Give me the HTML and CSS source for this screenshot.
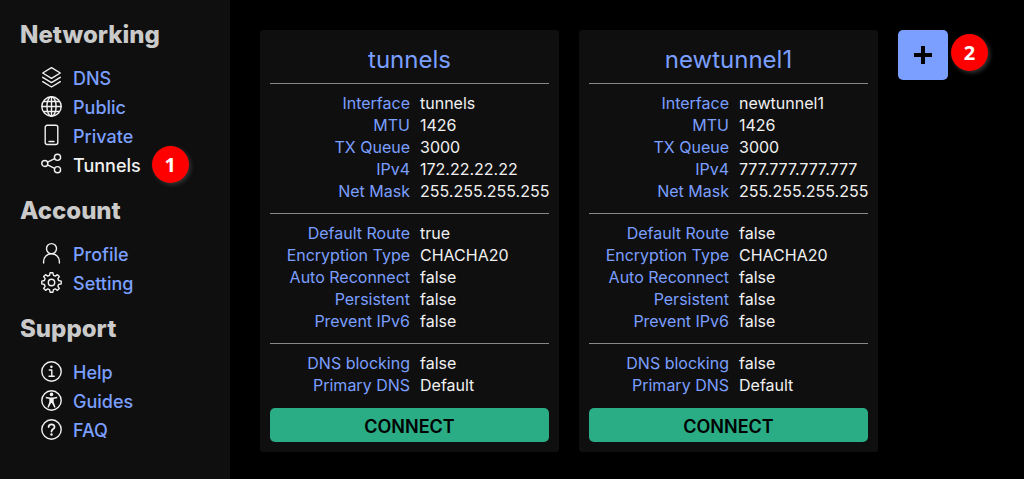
FILE: index.html
```html
<!DOCTYPE html>
<html lang="en">
<head>
<meta charset="utf-8">
<title>Tunnels</title>
<link rel="stylesheet" href="styles.css">
</head>
<body>
<div class="app">
  <nav class="sidebar">
    <section class="group">
      <h2 class="group-title">Networking</h2>
      <a class="nav-item" href="#dns"><svg class="icon" viewBox="0 0 21 21"><path d="M10.500 .7 19.300 6 10.500 11.300 1.700 6Z"/><path d="M1.700 10.300 10.500 15.600 19.300 10.300M1.700 14.700 10.500 20 19.300 14.700"/></svg>DNS</a>
      <a class="nav-item" href="#public"><svg class="icon" viewBox="0 0 21 21"><circle cx="10.500" cy="10.500" r="9.700"/><ellipse cx="10.500" cy="10.500" rx="4.600" ry="9.700"/><path d="M10.500 .8V20.200M.8 10.500H20.200M2.500 5.500H18.500M2.500 15.500H18.500"/></svg>Public</a>
      <a class="nav-item" href="#private"><svg class="icon" viewBox="0 0 21 21"><rect x="4.200" y=".3" width="12.600" height="19.200" rx="2"/><path d="M8 16.500H13"/></svg>Private</a>
      <a class="nav-item active" href="#tunnels"><svg class="icon" viewBox="0 0 21 21"><circle cx="3.800" cy="9.500" r="3"/><circle cx="16.500" cy="3.300" r="3.100"/><circle cx="16.500" cy="15.700" r="3.100"/><path d="M6.500 8.200 13.700 4.700M6.500 10.800 13.700 14.300"/></svg>Tunnels<span class="badge nav-badge">1</span></a>
    </section>
    <section class="group">
      <h2 class="group-title">Account</h2>
      <a class="nav-item" href="#profile"><svg class="icon" viewBox="0 0 21 21"><circle cx="10.500" cy="5.600" r="5"/><path d="M2.600 20V18.500C2.600 14 6 10.800 10.500 10.800S18.400 14 18.400 18.500V20"/></svg>Profile</a>
      <a class="nav-item" href="#setting"><svg class="icon" viewBox="0 0 21 21"><circle cx="10.500" cy="10.500" r="3.200"/><path d="M9.100 .8H11.900L12.500 3.400 14.300 4.100 16.400 2.700 18.300 4.600 16.900 6.700 17.600 8.500 20.200 9.100V11.900L17.600 12.500 16.900 14.300 18.300 16.400 16.400 18.300 14.300 16.900 12.500 17.600 11.900 20.200H9.100L8.500 17.600 6.700 16.900 4.600 18.300 2.700 16.400 4.100 14.300 3.400 12.500 .8 11.900V9.100L3.400 8.500 4.100 6.700 2.700 4.600 4.600 2.700 6.700 4.100 8.500 3.400Z"/></svg>Setting</a>
    </section>
    <section class="group">
      <h2 class="group-title">Support</h2>
      <a class="nav-item" href="#help"><svg class="icon" viewBox="0 0 21 21"><circle cx="10.500" cy="10.500" r="9.700"/><path d="M8.300 9H10.800V15M8 15.200H13.200"/><circle class="solid" cx="10.400" cy="5.800" r="1.300"/></svg>Help</a>
      <a class="nav-item" href="#guides"><svg class="icon" viewBox="0 0 21 21"><circle cx="10.500" cy="10.500" r="9.700"/><circle class="solid" cx="10.500" cy="4.400" r="1.800"/><path class="solid" d="M4.800 6.800 9 7.500H12L16.200 6.800V8.200L12.700 9V12L14.600 17.200 13.400 17.800 10.900 13H10.100L7.600 17.800 6.400 17.200 8.300 12V9L4.800 8.200Z"/></svg>Guides</a>
      <a class="nav-item" href="#faq"><svg class="icon" viewBox="0 0 21 21"><circle cx="10.500" cy="10.500" r="9.700"/><path class="bold" d="M7.600 8C7.600 4.400 13.600 4.500 13.500 7.900 13.500 10 10.500 10.100 10.500 12.600"/><circle class="solid" cx="10.500" cy="15.500" r="1.200"/></svg>FAQ</a>
    </section>
  </nav>
  <main class="content">
    <article class="card">
      <h3 class="card-title">tunnels</h3>
      <dl class="details">
        <dt>Interface</dt><dd>tunnels</dd>
        <dt>MTU</dt><dd>1426</dd>
        <dt>TX Queue</dt><dd>3000</dd>
        <dt>IPv4</dt><dd>172.22.22.22</dd>
        <dt>Net Mask</dt><dd>255.255.255.255</dd>
      </dl>
      <dl class="details">
        <dt>Default Route</dt><dd>true</dd>
        <dt>Encryption Type</dt><dd>CHACHA20</dd>
        <dt>Auto Reconnect</dt><dd>false</dd>
        <dt>Persistent</dt><dd>false</dd>
        <dt>Prevent IPv6</dt><dd>false</dd>
      </dl>
      <dl class="details">
        <dt>DNS blocking</dt><dd>false</dd>
        <dt>Primary DNS</dt><dd>Default</dd>
      </dl>
      <button class="connect" type="button">CONNECT</button>
    </article>
    <article class="card">
      <h3 class="card-title">newtunnel1</h3>
      <dl class="details">
        <dt>Interface</dt><dd>newtunnel1</dd>
        <dt>MTU</dt><dd>1426</dd>
        <dt>TX Queue</dt><dd>3000</dd>
        <dt>IPv4</dt><dd>777.777.777.777</dd>
        <dt>Net Mask</dt><dd>255.255.255.255</dd>
      </dl>
      <dl class="details">
        <dt>Default Route</dt><dd>false</dd>
        <dt>Encryption Type</dt><dd>CHACHA20</dd>
        <dt>Auto Reconnect</dt><dd>false</dd>
        <dt>Persistent</dt><dd>false</dd>
        <dt>Prevent IPv6</dt><dd>false</dd>
      </dl>
      <dl class="details">
        <dt>DNS blocking</dt><dd>false</dd>
        <dt>Primary DNS</dt><dd>Default</dd>
      </dl>
      <button class="connect" type="button">CONNECT</button>
    </article>
    <div class="add-area">
      <button class="add" type="button" aria-label="Add tunnel"><svg class="plus" viewBox="0 0 20 20"><path d="M10 1V19M1 10H19"/></svg></button>
      <span class="badge add-badge">2</span>
    </div>
  </main>
</div>
</body>
</html>
```

FILE: styles.css
```css
* {
  box-sizing: border-box;
}

body {
  margin: 0;
  background: #000;
  color: #f1f1f1;
  font-family: Inter, "Liberation Sans", sans-serif;
}

.app {
  display: flex;
  min-height: 100vh;
}

.sidebar {
  flex: 0 0 230px;
  display: flex;
  flex-direction: column;
  gap: 16px;
  padding: 20px;
  background: #0f0f0f;
}

.group {
  display: flex;
  flex-direction: column;
  align-items: flex-start;
}

.group-title {
  margin: 0 0 15px;
  color: #cacaca;
  font-size: 24px;
  font-weight: 800;
  line-height: 29px;
}

.nav-item {
  position: relative;
  display: flex;
  align-items: center;
  gap: 11px;
  padding-left: 21px;
  color: #7b9fff;
  font-size: 18px;
  font-weight: 500;
  line-height: 29px;
  text-decoration: none;
}

.active {
  color: #f1f1f1;
}

.icon {
  width: 21px;
  height: 21px;
  margin-bottom: 3px;
  overflow: visible;
  fill: none;
  stroke: #f1f1f1;
  stroke-width: 1.4;
  stroke-linecap: round;
  stroke-linejoin: round;
}

.icon .solid {
  fill: #f1f1f1;
  stroke: none;
}

.icon .bold {
  stroke-width: 1.8;
}

.badge {
  display: flex;
  align-items: center;
  justify-content: center;
  width: 37px;
  height: 37px;
  border-radius: 50%;
  background: #f00;
  box-shadow: 2px 2px 4px #333;
  color: #fff;
  font-family: "Noto Sans", sans-serif;
  font-size: 20px;
  font-weight: 700;
  line-height: 24px;
}

.nav-badge {
  position: absolute;
  top: -5px;
  left: calc(100% + 11px);
}

.content {
  flex: 1;
  display: flex;
  align-items: flex-start;
  gap: 20px;
  padding: 30px 30px 27px;
}

.card {
  flex: 0 0 299px;
  display: flex;
  flex-direction: column;
  min-width: 0;
  padding: 10px;
  border-radius: 3px;
  background: #0f0f0f;
}

.card-title {
  margin: 0;
  padding: 5px 0 9px;
  color: #7b9fff;
  font-size: 24px;
  font-weight: 400;
  line-height: 29px;
  text-align: center;
}

.details {
  display: grid;
  grid-template-columns: 140px minmax(0, 1fr);
  column-gap: 10px;
  margin: 0;
  padding: 8px 0 11px;
  border-top: 1px solid #888;
  font-size: 16px;
  font-weight: 400;
  line-height: 22px;
}

.details dt {
  color: #7b9fff;
  text-align: right;
}

.details dd {
  margin: 0;
}

.connect {
  margin-top: 1px;
  padding: 4px 0 0;
  border: 0;
  border-radius: 5px;
  background: #2aac85;
  color: #000;
  font: 600 18px/30px Inter, "Liberation Sans", sans-serif;
}

.add-area {
  display: flex;
  align-items: flex-start;
  gap: 3px;
}

.add {
  display: flex;
  align-items: center;
  justify-content: center;
  width: 50px;
  height: 50px;
  padding: 0;
  border: 0;
  border-radius: 5px;
  background: #7b9fff;
}

.plus {
  width: 20px;
  height: 20px;
  fill: none;
  stroke: #000;
  stroke-width: 4;
}

.add-badge {
  margin-top: 4px;
}
```
